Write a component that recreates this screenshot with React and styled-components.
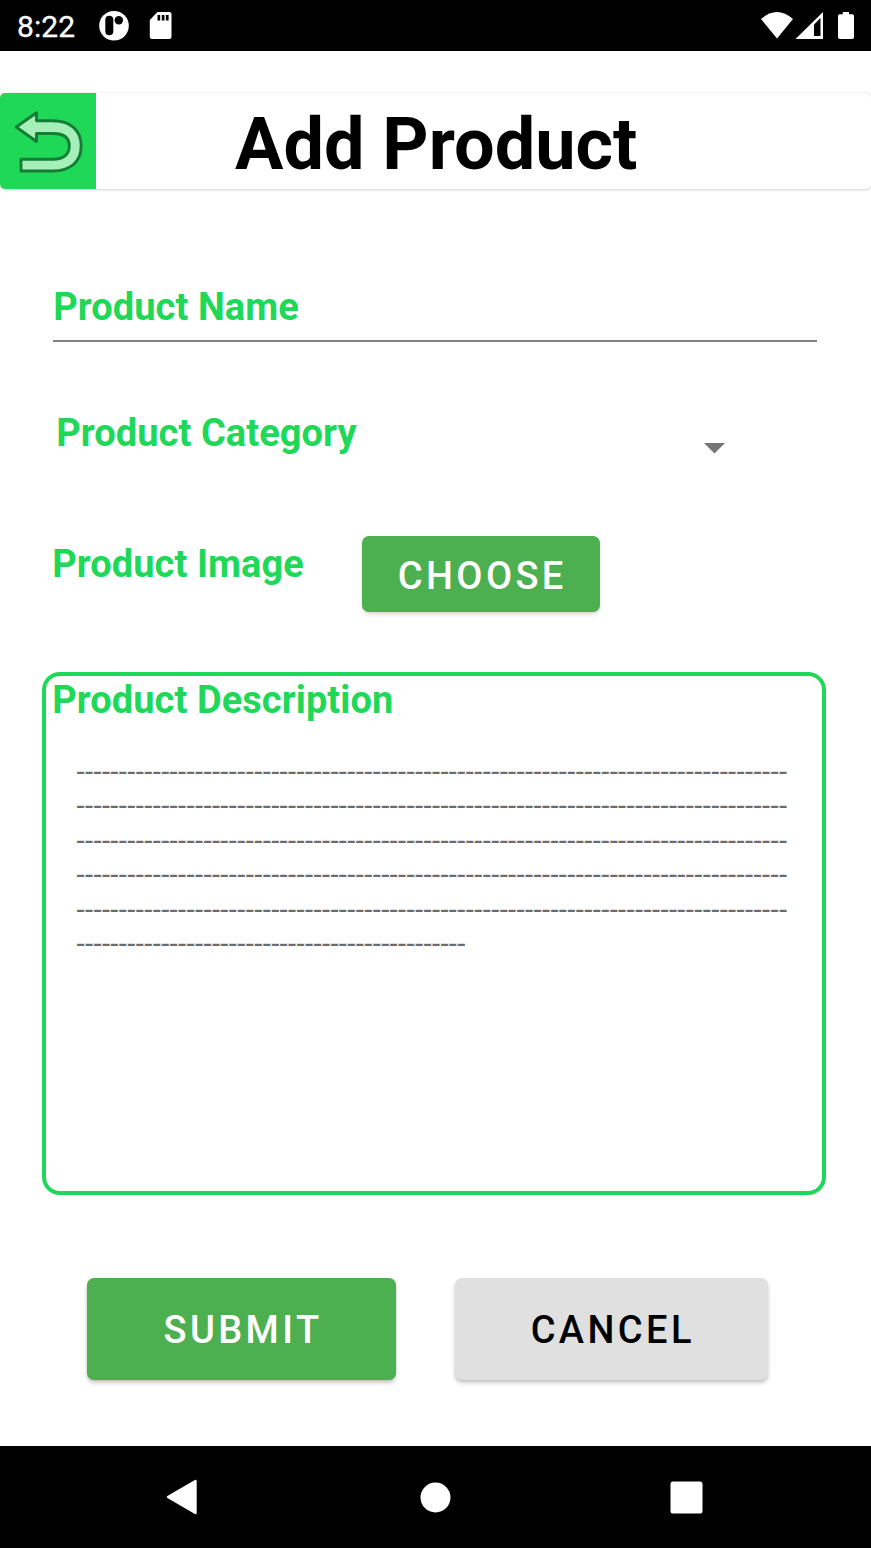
import React from "react";
import styled, { createGlobalStyle } from "styled-components";

const GlobalStyle = createGlobalStyle`
  * { box-sizing: border-box; }
  body { margin: 0; background: #fff; font-family: Roboto, "Liberation Sans", sans-serif; }
  svg { display: block; flex: none; }
`;

const Screen = styled.div`
  display: flex;
  flex-direction: column;
  width: 871px;
  height: 1548px;
  background: #fff;
  overflow: hidden;
`;

const StatusBar = styled.header`
  display: flex;
  justify-content: space-between;
  height: 51px;
  flex: none;
  background: #000;
  color: #fff;
`;

const Clock = styled.span`
  width: 82px;
  padding-left: 17px;
  font-size: 30px;
  line-height: 53px;
  letter-spacing: 0.1px;
  -webkit-text-stroke: 0.3px #fff;
`;

const StatusGroup = styled.div`
  display: flex;
`;

const AppBar = styled.div`
  display: flex;
  height: 96px;
  flex: none;
  margin-top: 42px;
  border-radius: 5px;
  background: #fff;
  box-shadow: 0 1px 3px rgba(0, 0, 0, 0.15), 0 0 2px rgba(0, 0, 0, 0.12);
`;

const BackButton = styled.button`
  width: 95.5px;
  height: 96px;
  padding: 0;
  border: 0;
  border-radius: 5px 0 0 5px;
  background: #20d857;
`;

const Title = styled.h1`
  margin: 0;
  padding-left: 139.5px;
  font-size: 72px;
  font-weight: 700;
  line-height: 104px;
  white-space: nowrap;
`;

const Form = styled.main`
  display: flex;
  flex-direction: column;
  flex: 1;
  padding: 96px 45px 0 42px;
`;

const Label = styled.label`
  padding-left: 0.2px;
  font-size: 38px;
  font-weight: 700;
  line-height: 45px;
  letter-spacing: 0.08px;
  color: #20d857;
  white-space: nowrap;
`;

const NameField = styled.div`
  height: 57px;
  margin: 0 9px 0 11px;
  border-bottom: 2px solid #808080;
`;

const CategoryField = styled.div`
  display: flex;
  justify-content: space-between;
  height: 45px;
  margin: 69px 101px 0 14px;
`;

const ImageField = styled.div`
  display: flex;
  justify-content: space-between;
  height: 77px;
  margin: 80px 226px 0 10px;
`;

const ImageLabel = styled(Label)`
  padding-top: 6px;
`;

const Button = styled.button`
  width: ${(p) => p.$w};
  height: ${(p) => p.$h};
  padding: ${(p) => (p.$flat ? "4px" : "2px")} 0 0 3px;
  border: 0;
  border-radius: 7px;
  background: ${(p) => (p.$plain ? "#e0e0e0" : "#4caf50")};
  color: ${(p) => (p.$plain ? "#000" : "#fff")};
  font: 500 38px/46px Roboto, "Liberation Sans", sans-serif;
  letter-spacing: 3.4px;
  box-shadow: 0 3px 4px rgba(0, 0, 0, ${(p) => (p.$flat ? 0.1 : 0.2)}), 0 1px 2px rgba(0, 0, 0, 0.08);
`;

const Description = styled.section`
  height: 523px;
  flex: none;
  margin-top: 59px;
  padding: 2px 0 0 6px;
  border: 4px solid #20d857;
  border-radius: 18px;
`;

const Lines = styled.p`
  margin: 32px 0 0 24.5px;
  font-size: 29.4px;
  line-height: 34.4px;
  letter-spacing: 0.34px;
  color: #6c6c6c;
  white-space: pre;
`;

const Actions = styled.div`
  display: flex;
  gap: 59px;
  margin: 83px 0 0 45px;
`;

const NavBar = styled.nav`
  display: flex;
  align-items: center;
  height: 102px;
  flex: none;
  padding-left: 166px;
  background: #000;
`;

const NavItem = styled.div`
  width: ${(p) => p.$w};
`;

const full = "-".repeat(84);
const rows = [full, full, full, full, full, "-".repeat(46)];

export default function App() {
  return (
    <>
      <GlobalStyle />
      <Screen>
        <StatusBar>
          <StatusGroup>
            <Clock>8:22</Clock>
            <svg width="100" height="51" viewBox="82 0 100 51">
              <circle cx="114" cy="25.7" r="14.8" fill="#fff" />
              <rect x="105.3" y="15.7" width="8" height="19.6" rx="4" />
              <circle cx="118.8" cy="20.2" r="4.2" />
              <path d="M157.5 12H169.300q2.200 0 2.200 2.200v22.600q0 2.200-2.200 2.200H152q-2.200 0-2.200-2.200V20Z" fill="#fff" />
              <path d="M157.500 15h2.700v5.500h-2.700zM161.800 15h2.700v5.500h-2.700zM165.900 15h2.700v5.500h-2.700z" />
            </svg>
          </StatusGroup>
          <svg width="131" height="51" viewBox="740 0 131 51">
            <path d="M761 19Q776.800 5 793 19L777 38.500Z" fill="#fff" />
            <path d="M823 12V39H795.500Z" fill="#fff" />
            <path d="M820.500 18V36H814V24.500Z" />
            <path d="M842.800 12h6.200v2.300h3.300q1.700 0 1.700 1.700v21.300q0 1.700-1.700 1.700h-12.600q-1.700 0-1.700-1.700V16q0-1.700 1.700-1.700h3.100Z" fill="#fff" />
          </svg>
        </StatusBar>

        <AppBar>
          <BackButton aria-label="Back">
            <svg width="95" height="96" viewBox="0 93 95 96">
              <path
                d="M16.200 127L36.500 112.700V120.700H53C70 120.700 81.200 130 81.200 146C81.200 162 70 171 53 171H21V159.200H53C64 159.200 69.300 154 69.300 146C69.300 138 64 133.500 53 133.500H36.500V141.500Z"
                fill="#a5f0b9"
                stroke="#157c35"
                strokeWidth="2.900"
                strokeLinejoin="round"
              />
            </svg>
          </BackButton>
          <Title>Add Product</Title>
        </AppBar>

        <Form>
          <NameField>
            <Label>Product Name</Label>
          </NameField>
          <CategoryField>
            <Label>Product Category</Label>
            <svg width="21" height="45" viewBox="0 0 21 45">
              <path d="M0 32H21L10.500 42.500Z" fill="#757575" />
            </svg>
          </CategoryField>
          <ImageField>
            <ImageLabel>Product Image</ImageLabel>
            <Button $w="238.5px" $h="76px" $flat>CHOOSE</Button>
          </ImageField>
          <Description>
            <Label>Product Description</Label>
            <Lines>{rows.join("\n")}</Lines>
          </Description>
          <Actions>
            <Button $w="309px" $h="101.5px">SUBMIT</Button>
            <Button $w="312.5px" $h="101.5px" $plain>CANCEL</Button>
          </Actions>
        </Form>

        <NavBar>
          <NavItem $w="254px">
            <svg width="31" height="36" viewBox="0 0 31 36">
              <path d="M2 18L29.500 2V34Z" fill="#fff" stroke="#fff" strokeWidth="2.400" strokeLinejoin="round" />
            </svg>
          </NavItem>
          <NavItem $w="250px">
            <svg width="31" height="31" viewBox="0 0 31 31">
              <circle cx="15.500" cy="15.500" r="15" fill="#fff" />
            </svg>
          </NavItem>
          <svg width="33" height="33" viewBox="0 0 33 33">
            <rect x="0.500" y="0.500" width="32" height="32" rx="2.500" fill="#fff" />
          </svg>
        </NavBar>
      </Screen>
    </>
  );
}
